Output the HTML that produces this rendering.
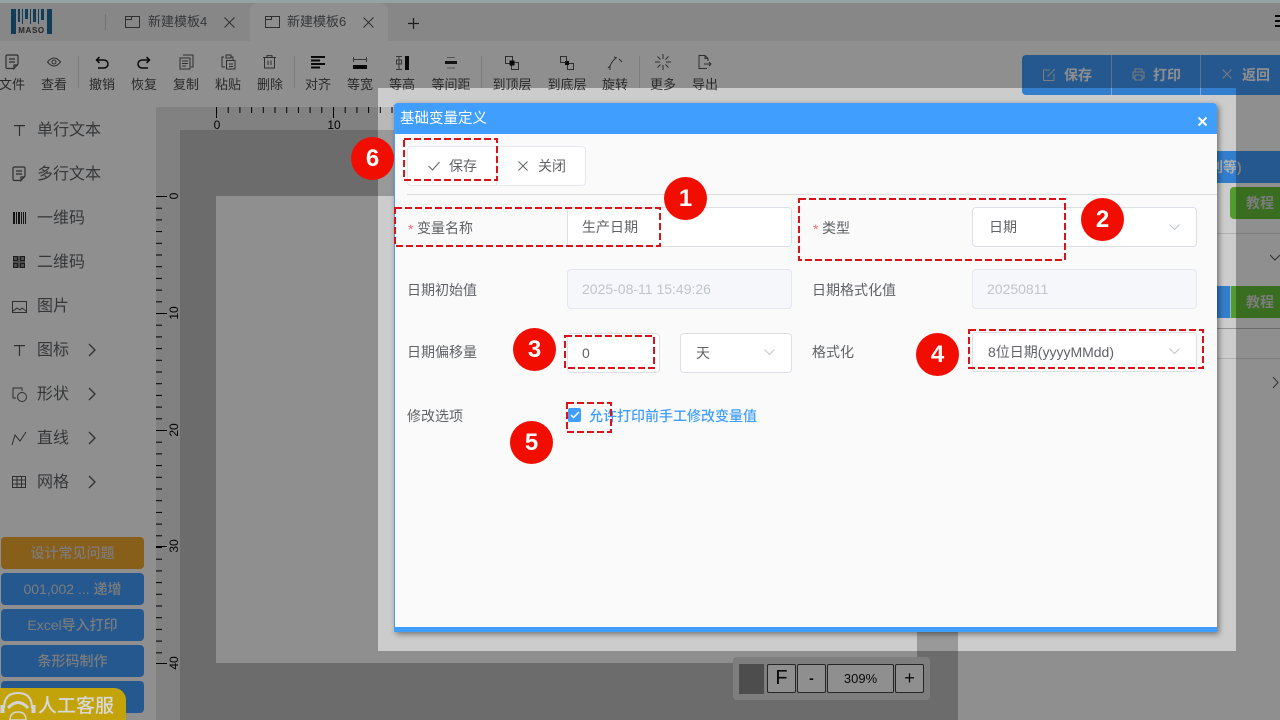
<!DOCTYPE html>
<html lang="zh"><head><meta charset="utf-8"><title>基础变量定义</title>
<style>
html,body{margin:0;padding:0;width:1280px;height:720px;overflow:hidden;background:#fff}
body{position:relative;font-family:"Liberation Sans","Noto Sans CJK SC",sans-serif;font-size:14px;color:#606266}
.a,.t,.tb,.sb,.c,.b,.inp,.lb,svg.i{position:absolute}
.t{white-space:nowrap;line-height:20px}
.tb{width:60px;text-align:center;top:76px;font-size:13px;line-height:18px;color:#4a4a4a;white-space:nowrap}
svg.i{fill:none;stroke:#555;stroke-width:1}
.sb{left:37px;font-size:16px;line-height:20px;color:#606266;white-space:nowrap}
.sep{position:absolute;top:56px;height:32px;width:1px;background:#ddd}
.b{left:1px;width:143px;height:32px;border-radius:4px;background:#409eff;color:#ddd;text-align:center;line-height:32px;font-size:14px}
.inp{box-sizing:border-box;height:40px;background:#fff;border:1px solid #dcdfe6;border-radius:4px;color:#606266;line-height:38px;padding-left:14px;white-space:nowrap}
.dis{background:#f5f7fa;border-color:#e4e7ed;color:#c0c4cc}
.lb{line-height:20px;color:#606266;white-space:nowrap}
.c{width:43px;height:43px;border-radius:50%;background:#f10e00;color:#fff;font:bold 24px/43px "Liberation Sans",sans-serif;text-align:center}
.z{position:absolute;top:664px;height:29px;box-sizing:border-box;border:1px solid #444;border-radius:2px;background:#fff;text-align:center;color:#111;line-height:27px}
</style></head><body>

<!-- page -->
<div class="a" style="left:0;top:3px;width:1280px;height:38px;background:#f0f0f0"></div>
<div class="a" style="left:250px;top:3px;width:138px;height:38px;background:#fff;border-radius:8px 8px 0 0"></div>
<svg class="i" style="left:11px;top:8px" width="42" height="27" viewBox="0 0 42 27">
<g fill="#1f6d9e" stroke="none"><rect x="0" y="1" width="5" height="25"/><rect x="36" y="1" width="5" height="25"/><rect x="7" y="1" width="2" height="13"/><rect x="11" y="1" width="1" height="15"/><rect x="14" y="1" width="3" height="10"/><rect x="19" y="1" width="1" height="15"/><rect x="22" y="1" width="3" height="13"/><rect x="27" y="1" width="1" height="15"/><rect x="30" y="1" width="3" height="11"/></g>
<text x="20.500" y="25" font-size="8" font-weight="bold" letter-spacing=".6" text-anchor="middle" fill="#444" stroke="none" font-family="Liberation Sans">MASO</text></svg>
<div class="a" style="left:105px;top:14px;width:1px;height:16px;background:#ccc"></div>
<svg class="i" style="left:125px;top:15px" width="15" height="14"><path d="M.5 1.500h14v11H.5zM.5 4.500h6V1.500"/></svg>
<div class="t" style="left:148px;top:12px;font-size:13px">新建模板4</div>
<svg class="i" style="left:224px;top:17px" width="11" height="11"><path d="M.5.500l10 10M10.500.500l-10 10"/></svg>
<svg class="i" style="left:265px;top:15px" width="15" height="14"><path d="M.5 1.500h14v11H.5zM.5 4.500h6V1.500"/></svg>
<div class="t" style="left:287px;top:12px;font-size:13px">新建模板6</div>
<svg class="i" style="left:363px;top:17px" width="11" height="11"><path d="M.5.500l10 10M10.500.500l-10 10"/></svg>
<svg class="i" style="left:408px;top:18px;stroke:#333;stroke-width:1.200" width="11" height="11"><path d="M5.500 0v11M0 5.500h11"/></svg>
<svg class="i" style="left:1275px;top:15px;stroke:#111;stroke-width:2" width="5" height="12"><path d="M0 1h5M0 6h5M0 11h5"/></svg>

<!-- toolbar -->
<div class="tb" style="left:-18px">文件</div><div class="tb" style="left:24px">查看</div><div class="tb" style="left:72px">撤销</div><div class="tb" style="left:114px">恢复</div><div class="tb" style="left:156px">复制</div><div class="tb" style="left:198px">粘贴</div><div class="tb" style="left:240px">删除</div><div class="tb" style="left:288px">对齐</div><div class="tb" style="left:330px">等宽</div><div class="tb" style="left:372px">等高</div><div class="tb" style="left:421px">等间距</div><div class="tb" style="left:482px">到顶层</div><div class="tb" style="left:537px">到底层</div><div class="tb" style="left:585px">旋转</div><div class="tb" style="left:633px">更多</div><div class="tb" style="left:675px">导出</div>
<div class="sep" style="left:78px"></div><div class="sep" style="left:294px"></div><div class="sep" style="left:481px"></div><div class="sep" style="left:639px"></div>
<svg class="i" style="left:5px;top:54px;stroke-width:1.200" width="14" height="16"><path d="M9 14.500H2.500Q1 14.500 1 13V2.500Q1 1 2.500 1h9Q13 1 13 2.500V10l-4 4.500V11h4M4 5h6M4 8h6"/></svg>
<svg class="i" style="left:47px;top:56px" width="14" height="12"><path d="M.5 6Q7-2 13.500 6 7 14 .5 6z"/><circle cx="7" cy="6" r="2"/></svg>
<svg class="i" style="left:95px;top:56px;stroke:#111;stroke-width:1.500" width="14" height="13"><path d="M4.500 1L1.500 4l3 3M1.500 4H9a3.800 3.800 0 0 1 0 8H3"/></svg>
<svg class="i" style="left:137px;top:56px;stroke:#111;stroke-width:1.500" width="14" height="13"><path d="M9.500 1l3 3-3 3M12.500 4H5a3.800 3.800 0 0 0 0 8h6"/></svg>
<svg class="i" style="left:179px;top:54px" width="15" height="16"><path d="M4 1h10v12h-2M1 4h10v11H1zM3 7h6M3 9.500h6M3 12h4"/></svg>
<svg class="i" style="left:221px;top:54px" width="15" height="16"><path d="M3 3H1v10h3M5 1h5v3H5zM10 3h2v3M5.500 6.500h8.500v8.500H5.500zM8 10h4M8 12.500h4"/></svg>
<svg class="i" style="left:263px;top:55px" width="13" height="14"><path d="M0 2.500h13M4 2.500V.6h5v1.900M1.500 2.500V13h10V2.500M5 5.500v4.500M8 5.500v4.500"/></svg>
<svg class="i" style="left:311px;top:56px;stroke:#111;stroke-width:2" width="14" height="13"><path d="M0 1h14M0 4.500h9M0 8h14M0 11.500h9"/></svg>
<svg class="i" style="left:353px;top:56px;stroke:#666" width="14" height="14"><path d="M.5 1v5M13.500 1v5M1 3.500h12"/><rect x="0" y="9" width="14" height="4" fill="#111" stroke="none"/></svg>
<svg class="i" style="left:395px;top:56px;stroke:#666" width="15" height="14"><path d="M1 .5h6M1 13.500h6M4 1v12"/><rect x="1.500" y="4" width="5" height="4" fill="none"/><rect x="10" y="0" width="4" height="14" fill="#111" stroke="none"/></svg>
<svg class="i" style="left:444px;top:57px" width="14" height="12"><rect x="1" y="4" width="12" height="3" fill="#222" stroke="none"/><path d="M3 .5h8M3 11h8" stroke="#999"/></svg>
<svg class="i" style="left:505px;top:56px" width="14" height="14"><path d="M.5.500h7v7h-7zM6.500 6.500h7v7h-7z"/><rect x="4.500" y="4.500" width="5" height="5" fill="#111" stroke="none"/></svg>
<svg class="i" style="left:560px;top:56px" width="14" height="14"><path d="M.5.500h6v6h-6zM7.500 7.500h6v6h-6z"/><rect x="5" y="5" width="4" height="4" fill="#111" stroke="none"/></svg>
<svg class="i" style="left:607px;top:56px" width="16" height="14"><path d="M3 14V10Q5 5 9 2M7 1l3 1M12 3l3 3M3 10l-2 2"/></svg>
<svg class="i" style="left:655px;top:54px" width="16" height="16"><path d="M8 0v5M8 11v5M0 8h5M11 8h5M2.500 2.500l3 3M10.500 10.500l3 3M13.500 2.500l-3 3M5.500 10.500l-3 3"/></svg>
<svg class="i" style="left:698px;top:55px" width="14" height="15"><path d="M9 13.500H1V.5h6l3 3V6M7 .5v3h3M6 9h7M11 7l2 2-2 2"/></svg>

<!-- sidebar -->
<div class="sb" style="top:121px">单行文本</div><div class="sb" style="top:165px">多行文本</div><div class="sb" style="top:209px">一维码</div><div class="sb" style="top:253px">二维码</div><div class="sb" style="top:297px">图片</div><div class="sb" style="top:341px">图标</div><div class="sb" style="top:385px">形状</div><div class="sb" style="top:429px">直线</div><div class="sb" style="top:473px">网格</div>
<svg class="i" style="left:14px;top:125px;stroke-width:1.200" width="11" height="11"><path d="M0 .6h11M5.500 .6V11"/></svg>
<svg class="i" style="left:12px;top:166px;stroke-width:1.200" width="14" height="16"><path d="M9 14.500H2.500Q1 14.500 1 13V2.500Q1 1 2.500 1h9Q13 1 13 2.500V10l-4 4.500V11h4M4 5h6M4 8h6"/></svg>
<svg class="i" style="left:13px;top:212px;stroke:none" width="13" height="12"><g fill="#222"><rect width="2" height="12"/><rect x="3" width="1" height="12"/><rect x="5" width="2" height="12"/><rect x="8" width="1" height="12"/><rect x="10" width="1" height="12"/><rect x="12" width="1" height="12"/></g></svg>
<svg class="i" style="left:13px;top:256px;stroke:none" width="12" height="12"><rect width="12" height="12" fill="#8a8a8a"/><g fill="none" stroke="#333"><path d="M.5.500h4v4h-4zM7.500.500h4v4h-4zM.5 7.500h4v4h-4zM7.500 7.500h4v4h-4z"/></g></svg>
<svg class="i" style="left:12px;top:301px" width="15" height="12"><path d="M.5.500h14v11H.5zM1 10l4-3 3 2 2-2 4 3"/></svg>
<svg class="i" style="left:14px;top:345px;stroke-width:1.200" width="11" height="11"><path d="M0 .6h11M5.500 .6V11"/></svg>
<svg class="i" style="left:12px;top:387px" width="15" height="15"><path d="M4 11H1V1h9v3"/><circle cx="10" cy="10" r="4.500"/></svg>
<svg class="i" style="left:11px;top:431px" width="16" height="15"><path d="M1 14L4 4l5 6L15 1"/></svg>
<svg class="i" style="left:12px;top:476px" width="14" height="12"><path d="M.5.500h13v11H.5zM.5 4h13M.5 8h13M5 .5v11M9.500.5v11"/></svg>
<svg class="i" style="left:88px;top:343px;stroke-width:1.300" width="8" height="14"><path d="M1 1l6 6-6 6"/></svg>
<svg class="i" style="left:88px;top:387px;stroke-width:1.300" width="8" height="14"><path d="M1 1l6 6-6 6"/></svg>
<svg class="i" style="left:88px;top:431px;stroke-width:1.300" width="8" height="14"><path d="M1 1l6 6-6 6"/></svg>
<svg class="i" style="left:88px;top:475px;stroke-width:1.300" width="8" height="14"><path d="M1 1l6 6-6 6"/></svg>

<div class="b" style="top:537px;background:#f3a92f;font-weight:500">设计常见问题</div>
<div class="b" style="top:573px">001,002 ... <span style="font-weight:500">递增</span></div>
<div class="b" style="top:609px">Excel<span style="font-weight:500">导入打印</span></div>
<div class="b" style="top:645px;font-weight:500">条形码制作</div>
<div class="b" style="top:681px"></div>

<!-- canvas -->
<div class="a" style="left:156px;top:107px;width:802px;height:613px;background:#e6e6e6"></div>
<div class="a" style="left:180px;top:130px;width:778px;height:590px;background:#c0c0c0"></div>
<div class="a" style="left:216px;top:196px;width:701px;height:467px;background:#fff"></div>
<svg class="i" style="left:0;top:0;stroke:none" width="1280" height="720">
<defs><pattern id="h" patternUnits="userSpaceOnUse" x="216" y="107" width="11.7" height="20"><rect width="1" height="6" fill="#000"/></pattern>
<pattern id="v" patternUnits="userSpaceOnUse" x="156" y="196" width="20" height="11.7"><rect width="6" height="1" fill="#000"/></pattern></defs>
<rect x="216" y="107" width="180" height="6" fill="url(#h)"/>
<rect x="156" y="196" width="6" height="468" fill="url(#v)"/>
<g fill="#000"><rect x="216" y="107" width="1" height="11"/><rect x="333" y="107" width="1" height="11"/>
<rect x="156" y="196" width="11" height="1"/><rect x="156" y="313" width="11" height="1"/><rect x="156" y="430" width="11" height="1"/><rect x="156" y="546" width="11" height="1"/><rect x="156" y="663" width="11" height="1"/></g>
<g font-family="Liberation Sans" font-size="12" fill="#000" text-anchor="middle">
<text x="217" y="129">0</text><text x="334" y="129">10</text>
<text transform="translate(178,196) rotate(-90)">0</text><text transform="translate(178,313) rotate(-90)">10</text><text transform="translate(178,430) rotate(-90)">20</text><text transform="translate(178,546) rotate(-90)">30</text><text transform="translate(178,663) rotate(-90)">40</text></g>
</svg>

<!-- zoom bar -->
<div class="a" style="left:733px;top:657px;width:197px;height:43px;background:#e0e0e0;border-radius:4px"></div>
<div class="a" style="left:739px;top:664px;width:25px;height:30px;background:#8a8a8a"></div>
<div class="z" style="left:767px;width:29px;font-size:20px">F</div>
<div class="z" style="left:797px;width:29px;font-weight:bold">-</div>
<div class="z" style="left:827px;width:67px;font-size:13px">309%</div>
<div class="z" style="left:895px;width:29px;font-size:18px">+</div>

<!-- right panel -->
<div class="a" style="left:1022px;top:55px;width:258px;height:40px;background:#409eff;border-radius:4px 0 0 4px"></div>
<div class="a" style="left:1111px;top:55px;width:1px;height:40px;background:#a0cfff"></div>
<div class="a" style="left:1200px;top:55px;width:1px;height:40px;background:#a0cfff"></div>
<svg class="i" style="left:1043px;top:68px;stroke:#ddd" width="13" height="13"><path d="M11 6v6.500H.5V2H7M4.500 8.500L12 1"/></svg>
<div class="t" style="left:1064px;top:65px;color:#fff;font-weight:bold">保存</div>
<svg class="i" style="left:1132px;top:68px;stroke:#ddd" width="13" height="13"><path d="M3 4V1h7v3M3 10H1V4h11v6h-2M3 7h7v5H3z"/></svg>
<div class="t" style="left:1153px;top:65px;color:#fff;font-weight:bold">打印</div>
<svg class="i" style="left:1222px;top:69px;stroke:#ddd" width="10" height="10"><path d="M.5.500l9 9M9.500.500l-9 9"/></svg>
<div class="t" style="left:1242px;top:65px;color:#fff;font-weight:bold">返回</div>
<div class="a" style="left:1100px;top:151px;width:180px;height:32px;background:#409eff"></div>
<div class="t" style="left:1209px;top:157px;color:#ddd;font-weight:bold">别等)</div>
<div class="a" style="left:1230px;top:187px;width:50px;height:32px;background:#67c23a;border-radius:4px 0 0 4px"></div>
<div class="t" style="left:1246px;top:193px;color:#ddd;font-weight:bold">教程</div>
<div class="a" style="left:1100px;top:233px;width:180px;height:1px;background:#ddd"></div>
<svg class="i" style="left:1270px;top:254px" width="10" height="7"><path d="M0 1l5 5 5-5"/></svg>
<div class="a" style="left:1100px;top:286px;width:130px;height:32px;background:#409eff"></div>
<div class="a" style="left:1230px;top:286px;width:50px;height:32px;background:#67c23a;border-left:1px solid #c6e2ff;box-sizing:border-box"></div>
<div class="t" style="left:1246px;top:292px;color:#ddd;font-weight:bold">教程</div>
<div class="a" style="left:1100px;top:328px;width:180px;height:1px;background:#bbb"></div>
<div class="a" style="left:1100px;top:358px;width:180px;height:1px;background:#ddd"></div>
<svg class="i" style="left:1272px;top:377px" width="7" height="11"><path d="M1 0l5 5.500L1 11"/></svg>

<!-- mask -->
<div class="a" style="left:378px;top:88px;width:858px;height:563px;background:rgba(0,0,0,.2);box-shadow:0 0 0 2000px rgba(0,0,0,.44)"></div>
<div class="a" style="left:0;top:0;width:1280px;height:3px;background:#93a4a4"></div>

<!-- service badge -->
<div class="a" style="left:0;top:688px;width:126px;height:32px;background:#c2a40a;border-radius:0 12px 0 0"></div>
<svg class="i" style="left:0;top:691px;stroke:#d4d4d4;stroke-width:2" width="37" height="29"><path d="M4 17Q4 2 18 2T32 17"/><path d="M2.500 14v8M33.500 14v8" stroke-width="4"/><path d="M8 17Q18 6 28 17" stroke-width="3"/><path d="M10 29q0-8 8-8t8 8z" fill="#c2a40a" stroke="#d4d4d4" stroke-width="1.500"/></svg>
<div class="t" style="left:38px;top:695px;font-size:19px;line-height:24px;color:#d8d8d8;font-weight:500">人工客服</div>

<!-- dialog -->
<div class="a" style="left:394px;top:103px;width:823px;height:529px;box-sizing:border-box;background:#fafafa;border:solid #409eff;border-width:0 0 5px 1px;border-radius:4px 4px 0 0;box-shadow:2px 2px 6px rgba(0,0,0,.45)"></div>
<div class="a" style="left:394px;top:103px;width:823px;height:31px;background:#409eff;border-radius:4px 4px 0 0"></div>
<div class="t" style="left:400px;top:109px;color:#fff;font-size:14.500px">基础变量定义</div>
<svg class="i" style="left:1198px;top:117px;stroke:#fff;stroke-width:2" width="9" height="9"><path d="M.5.500l8 8M8.500.500l-8 8"/></svg>

<div class="a" style="left:407px;top:146px;width:179px;height:40px;box-sizing:border-box;background:#fff;border:1px solid #e4e7ed;border-radius:4px"></div>
<div class="a" style="left:496px;top:146px;width:1px;height:40px;background:#e4e7ed"></div>
<svg class="i" style="left:428px;top:161px;stroke:#606266" width="12" height="10"><path d="M.5 5l4 4L11.500 1"/></svg>
<div class="t" style="left:449px;top:156px">保存</div>
<svg class="i" style="left:518px;top:161px;stroke:#606266" width="10" height="10"><path d="M.5.500l9 9M9.500.500l-9 9"/></svg>
<div class="t" style="left:538px;top:156px">关闭</div>
<div class="a" style="left:407px;top:194px;width:810px;height:1px;background:#dcdcdc"></div>

<div class="lb" style="left:408px;top:219px;color:#f56c6c">*</div><div class="lb" style="left:417px;top:218px">变量名称</div>
<div class="inp" style="left:567px;top:207px;width:225px">生产日期</div>
<div class="lb" style="left:813px;top:219px;color:#f56c6c">*</div><div class="lb" style="left:822px;top:218px">类型</div>
<div class="inp" style="left:972px;top:207px;width:225px;padding-left:16px">日期</div>
<svg class="i" style="left:1169px;top:224px;stroke:#c0c4cc" width="11" height="7"><path d="M.5.500l5 5 5-5"/></svg>

<div class="lb" style="left:407px;top:280px">日期初始值</div>
<div class="inp dis" style="left:567px;top:269px;width:225px">2025-08-11 15:49:26</div>
<div class="lb" style="left:812px;top:280px">日期格式化值</div>
<div class="inp dis" style="left:972px;top:269px;width:225px">20250811</div>

<div class="lb" style="left:407px;top:342px">日期偏移量</div>
<div class="inp" style="left:567px;top:333px;width:93px">0</div>
<div class="inp" style="left:680px;top:333px;width:112px;padding-left:15px">天</div>
<svg class="i" style="left:764px;top:349px;stroke:#c0c4cc" width="11" height="7"><path d="M.5.500l5 5 5-5"/></svg>
<div class="lb" style="left:812px;top:342px">格式化</div>
<div class="inp" style="left:972px;top:332px;width:225px;padding-left:15px">8位日期(yyyyMMdd)</div>
<svg class="i" style="left:1169px;top:348px;stroke:#c0c4cc" width="11" height="7"><path d="M.5.500l5 5 5-5"/></svg>

<div class="lb" style="left:407px;top:406px">修改选项</div>
<div class="a" style="left:568px;top:408px;width:13px;height:14px;background:#409eff;border-radius:2px"></div>
<svg class="i" style="left:570px;top:411px;stroke:#fff;stroke-width:1.500" width="10" height="8"><path d="M1 4l2.500 2.500L9 1"/></svg>
<div class="lb" style="left:589px;top:406px;color:#409eff;font-weight:500">允许打印前手工修改变量值</div>

<!-- annotations -->
<svg class="i" style="left:0;top:0;stroke:#d8141a;stroke-width:2;stroke-dasharray:7 3" width="1280" height="720">
<rect x="404" y="139" width="93" height="41"/>
<rect x="395" y="208" width="265" height="38"/>
<rect x="799" y="199" width="266" height="61"/>
<rect x="565" y="336" width="89" height="32"/>
<rect x="969" y="330" width="234" height="38"/>
<rect x="567" y="403" width="44" height="29"/>
</svg>
<div class="c" style="left:664px;top:177px">1</div>
<div class="c" style="left:1081px;top:198px">2</div>
<div class="c" style="left:513px;top:328px">3</div>
<div class="c" style="left:916px;top:333px">4</div>
<div class="c" style="left:510px;top:421px">5</div>
<div class="c" style="left:351px;top:137px">6</div>
</body></html>
